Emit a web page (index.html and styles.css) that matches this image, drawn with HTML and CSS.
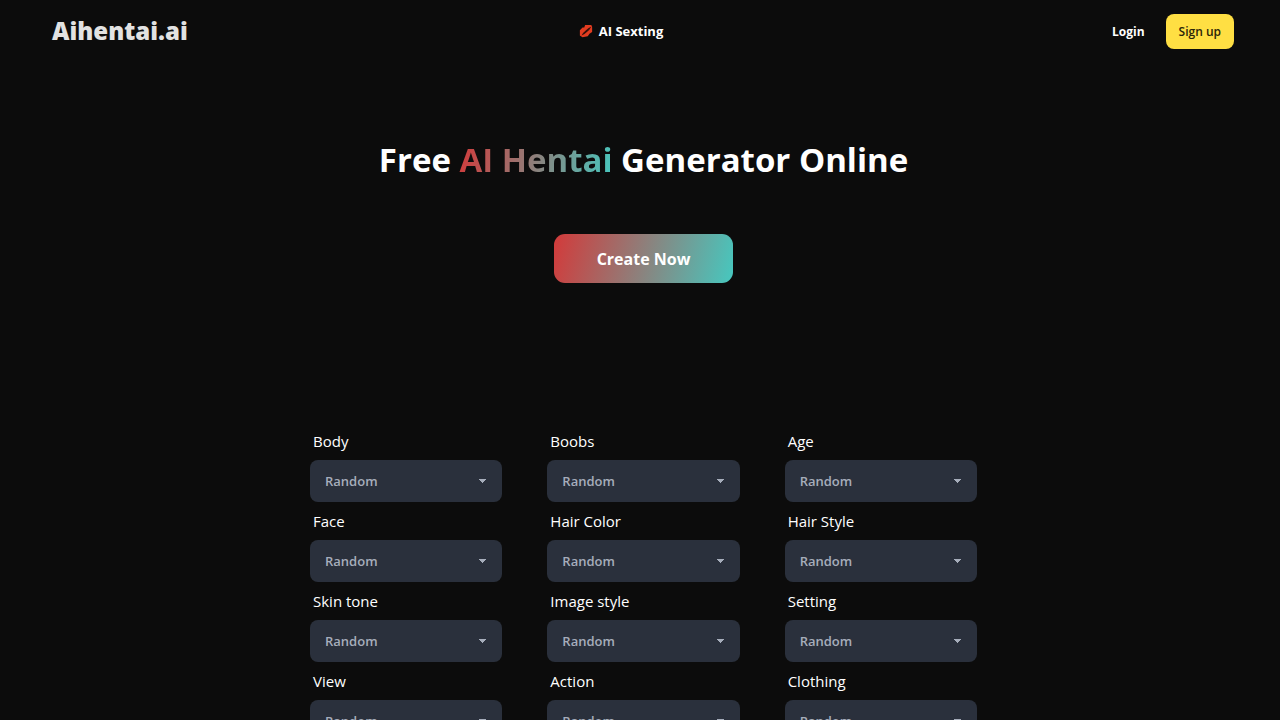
FILE: index.html
```html
<!DOCTYPE html>
<html lang="en">
<head>
  <meta charset="UTF-8">
  <meta name="viewport" content="width=device-width, initial-scale=1.0">
  <title>Free AI Hentai Generator Online</title>
  <link rel="stylesheet" href="styles.css">
</head>
<body>
  <header class="navbar">
    <a class="logo" href="#">Aihentai.ai</a>
    <nav class="nav-center">
      <a class="nav-link" href="#">
        <svg class="lips" viewBox="0 0 16 16" aria-hidden="true">
          <path d="M1 7 L4 4 L6 4 L7 1 L14 1 L15 3 L15 9 L12 11 L10 14 L4 15 L1 13 Z" fill="#e23c20"/>
          <path d="M3 13 Q4 10 8 7 Q11 4 14 3 Q12 7 9 9 Q6 12 3 13 Z" fill="#35100a"/>
        </svg>
        AI Sexting
      </a>
    </nav>
    <div class="nav-end">
      <a class="login" href="#">Login</a>
      <button class="signup" type="button">Sign up</button>
    </div>
  </header>

  <main>
    <section class="hero">
      <h1>Free <span class="gradient-text">AI Hentai</span> Generator Online</h1>
      <button class="create" type="button">Create Now</button>
    </section>

    <form class="options">
      <div class="field">
        <label for="body">Body</label>
        <select id="body"><option>Random</option></select>
      </div>
      <div class="field">
        <label for="boobs">Boobs</label>
        <select id="boobs"><option>Random</option></select>
      </div>
      <div class="field">
        <label for="age">Age</label>
        <select id="age"><option>Random</option></select>
      </div>
      <div class="field">
        <label for="face">Face</label>
        <select id="face"><option>Random</option></select>
      </div>
      <div class="field">
        <label for="hair-color">Hair Color</label>
        <select id="hair-color"><option>Random</option></select>
      </div>
      <div class="field">
        <label for="hair-style">Hair Style</label>
        <select id="hair-style"><option>Random</option></select>
      </div>
      <div class="field">
        <label for="skin-tone">Skin tone</label>
        <select id="skin-tone"><option>Random</option></select>
      </div>
      <div class="field">
        <label for="image-style">Image style</label>
        <select id="image-style"><option>Random</option></select>
      </div>
      <div class="field">
        <label for="setting">Setting</label>
        <select id="setting"><option>Random</option></select>
      </div>
      <div class="field">
        <label for="view">View</label>
        <select id="view"><option>Random</option></select>
      </div>
      <div class="field">
        <label for="action">Action</label>
        <select id="action"><option>Random</option></select>
      </div>
      <div class="field">
        <label for="clothing">Clothing</label>
        <select id="clothing"><option>Random</option></select>
      </div>
    </form>
  </main>
</body>
</html>
```

FILE: styles.css
```css
* {
  box-sizing: border-box;
}
body {
  margin: 0;
  background-color: #0c0c0c;
  color: #fff;
  font-family: "Segoe UI", "Open Sans", "Noto Sans", sans-serif;
  font-size: 15px;
}
a {
  color: inherit;
  text-decoration: none;
}
button {
  border: none;
  font-family: inherit;
  cursor: pointer;
}
.navbar {
  display: grid;
  grid-template-columns: 1fr auto 1fr;
  align-items: center;
  height: 62px;
  padding: 0 46px 0 52px;
}
.logo {
  color: #e2e2e2;
  font-size: 24px;
  font-weight: 800;
  line-height: 32px;
}
.nav-center {
  padding-right: 44px;
}
.nav-link {
  display: flex;
  align-items: center;
  gap: 6px;
  font-size: 13px;
  font-weight: 700;
}
.lips {
  width: 14px;
  height: 14px;
}
.nav-end {
  display: flex;
  align-items: center;
  justify-content: flex-end;
  gap: 21px;
  font-size: 12px;
}
.login {
  font-weight: 700;
}
.signup {
  height: 35px;
  padding: 0 13px;
  border-radius: 8px;
  background-color: #ffdf43;
  color: #2c2608;
  font-size: 12px;
  font-weight: 600;
}
main {
  padding-left: 7px;
}
.hero {
  display: flex;
  flex-direction: column;
  align-items: center;
  padding: 74px 16px 0;
}
h1 {
  margin: 0;
  font-size: 33px;
  font-weight: 700;
  line-height: 48px;
  text-align: center;
}
.gradient-text {
  background: linear-gradient(100deg, #d33a3a, #46c8bf);
  background-clip: text;
  -webkit-background-clip: text;
  color: transparent;
}
.create {
  height: 49px;
  margin-top: 50px;
  padding: 0 43px;
  border-radius: 11px;
  background: linear-gradient(105deg, #d33a3a, #46c8bf);
  color: #fff;
  font-size: 16px;
  font-weight: 700;
}
.options {
  display: grid;
  grid-template-columns: repeat(3, 1fr);
  column-gap: 45px;
  max-width: 667px;
  margin: 139px auto 0;
  padding-bottom: 40px;
}
.field {
  display: flex;
  flex-direction: column;
}
label {
  padding-left: 3px;
  line-height: 38px;
}
select {
  appearance: none;
  width: 100%;
  height: 42px;
  padding: 0 32px 0 15px;
  border: none;
  border-radius: 8px;
  background-color: #2a303c;
  background-image:
    linear-gradient(45deg, transparent 50%, #a6adbb 50%),
    linear-gradient(135deg, #a6adbb 50%, transparent 50%);
  background-position: right 19px center, right 15px center;
  background-size: 4px 4px;
  background-repeat: no-repeat;
  color: #a6adbb;
  font-family: inherit;
  font-size: 13px;
  font-weight: 600;
}
```
